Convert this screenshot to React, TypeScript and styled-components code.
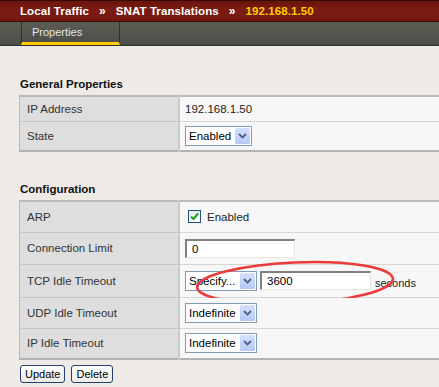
import styled, { createGlobalStyle } from "styled-components";

const GlobalStyle = createGlobalStyle`
  body {
    margin: 0;
    background: #eeebe6;
    font-family: "Liberation Sans", Arial, sans-serif;
    font-size: 11px;
    color: #222;
  }
`;

const generalRows = [{ label: "IP Address", value: "192.168.1.50" }];

const timeoutRows = ["UDP Idle Timeout", "IP Idle Timeout"];

function Select({ text, width }: { text: string; width: number }) {
  return (
    <StSelect style={{ width }}>
      <StSelectText>{text}</StSelectText>
      <StSelectArrow>
        <svg width="9" height="6" viewBox="0 0 9 6">
          <path d="M1 1 L4.5 4.5 L8 1" fill="none" stroke="#4d6185" strokeWidth="1.8" />
        </svg>
      </StSelectArrow>
    </StSelect>
  );
}

function App() {
  return (
    <>
      <GlobalStyle />
      <StTopBar>
        <StCrumb>Local Traffic</StCrumb>
        <StCrumbSep>»</StCrumbSep>
        <StCrumb>SNAT Translations</StCrumb>
        <StCrumbSep>»</StCrumbSep>
        <StCrumb $current>192.168.1.50</StCrumb>
      </StTopBar>
      <StTabBar>
        <StTab>Properties</StTab>
      </StTabBar>

      <StContent>
        <StSectionTitle>General Properties</StSectionTitle>
        <StTable>
          <tbody>
            {generalRows.map((row) => (
              <StRow key={row.label} $height={25}>
                <StLabel>{row.label}</StLabel>
                <StValue>{row.value}</StValue>
              </StRow>
            ))}
            <StRow $height={30}>
              <StLabel>State</StLabel>
              <StValue>
                <Select text="Enabled" width={67} />
              </StValue>
            </StRow>
          </tbody>
        </StTable>

        <StSectionTitle $top={31}>Configuration</StSectionTitle>
        <StTable>
          <tbody>
            <StRow $height={31}>
              <StLabel>ARP</StLabel>
              <StValue>
                <StCheckRow>
                  <StCheckbox>
                    <svg width="11" height="11" viewBox="0 0 11 11">
                      <path d="M2 5.5 L4.5 8 L9 2.5" fill="none" stroke="#21a121" strokeWidth="2" />
                    </svg>
                  </StCheckbox>
                  Enabled
                </StCheckRow>
              </StValue>
            </StRow>
            <StRow $height={32}>
              <StLabel>Connection Limit</StLabel>
              <StValue>
                <StInput style={{ width: 110 }}>0</StInput>
              </StValue>
            </StRow>
            <StRow $height={33}>
              <StLabel>TCP Idle Timeout</StLabel>
              <StValue>
                <StInline>
                  <Select text="Specify..." width={72} />
                  <StInput style={{ width: 111 }}>3600</StInput>
                  <StUnit>seconds</StUnit>
                </StInline>
                <StCircle width="204" height="48" viewBox="0 0 204 48">
                  <ellipse
                    cx="101"
                    cy="23"
                    rx="98"
                    ry="20.5"
                    transform="rotate(-2.5 101 23)"
                    fill="none"
                    stroke="#ec3b3b"
                    strokeWidth="2.6"
                  />
                </StCircle>
              </StValue>
            </StRow>
            {timeoutRows.map((label) => (
              <StRow key={label} $height={31}>
                <StLabel>{label}</StLabel>
                <StValue>
                  <Select text="Indefinite" width={72} />
                </StValue>
              </StRow>
            ))}
          </tbody>
        </StTable>

        <StButtons>
          <StButton>Update</StButton>
          <StButton>Delete</StButton>
        </StButtons>
      </StContent>
    </>
  );
}

const StTopBar = styled.div`
  display: flex;
  align-items: center;
  gap: 10px;
  padding-left: 20px;
  background: linear-gradient(#6a140c, #7b1b11 40%, #761810);
  border-top: 1px solid #3a0a05;
  border-bottom: 1px solid #3a0a05;
  box-sizing: border-box;
  height: 22px;
`;

const StCrumb = styled.span<{ $current?: boolean }>`
  font-size: 11.5px;
  font-weight: bold;
  letter-spacing: 0.1px;
  color: ${(props) => (props.$current ? "#ffcc00" : "#ffffff")};
`;

const StCrumbSep = styled.span`
  font-size: 12px;
  font-weight: bold;
  color: #ffffff;
`;

const StTabBar = styled.div`
  display: flex;
  height: 23px;
  padding-left: 21px;
  background: linear-gradient(#5c5c55, #4d4d47);
  border-bottom: 1px solid #2e2e2a;
`;

const StTab = styled.div`
  width: 99px;
  box-sizing: border-box;
  padding: 4px 0 0 10px;
  border-left: 1px solid #2e2e2a;
  border-right: 1px solid #2e2e2a;
  border-bottom: 3px solid #ffcc00;
  color: #e6e6e6;
  font-size: 11px;
`;

const StContent = styled.div`
  padding: 0 0 0 19px;
`;

const StSectionTitle = styled.div<{ $top?: number }>`
  margin-top: ${(props) => props.$top ?? 32}px;
  padding-left: 1px;
  height: 17px;
  font-size: 11.5px;
  font-weight: bold;
  color: #111;
`;

const StTable = styled.table`
  width: 100%;
  border-collapse: collapse;
  border-top: 2px solid #b9b9b9;
  border-bottom: 2px solid #b3b3b3;
  border-left: 1px solid #b9b9b9;
`;

const StRow = styled.tr<{ $height: number }>`
  height: ${(props) => props.$height}px;
  border-bottom: 1px solid #d6d6d6;
`;

const StLabel = styled.td`
  width: 151px;
  padding: 0 0 0 7px;
  background: #dedede;
  border-right: 2px solid #cacaca;
  border-bottom: 1px solid #c6c6c6;
  font-size: 11.5px;
  color: #333;
`;

const StValue = styled.td`
  position: relative;
  padding: 0 0 0 5px;
  background: #f7f7f7;
  font-size: 11.5px;
  color: #222;
`;

const StSelect = styled.div`
  display: flex;
  align-items: center;
  justify-content: space-between;
  box-sizing: border-box;
  height: 20px;
  background: #ffffff;
  border: 1px solid #7f9db9;
`;

const StSelectText = styled.span`
  padding-left: 3px;
  font-size: 11.5px;
  color: #000;
`;

const StSelectArrow = styled.span`
  display: flex;
  align-items: center;
  justify-content: center;
  width: 15px;
  height: 16px;
  margin-right: 1px;
  background: linear-gradient(#d4e0fb, #b6c9f7);
  border-radius: 1px;
`;

const StCheckRow = styled.div`
  display: flex;
  align-items: center;
  gap: 6px;
  padding-left: 3px;
  font-size: 11.5px;
`;

const StCheckbox = styled.span`
  display: flex;
  align-items: center;
  justify-content: center;
  width: 13px;
  height: 13px;
  box-sizing: border-box;
  background: linear-gradient(#e8e8e2, #ffffff);
  border: 1px solid #1c5180;
`;

const StInput = styled.div`
  box-sizing: border-box;
  height: 19px;
  padding: 2px 0 0 5px;
  background: #ffffff;
  border-top: 2px solid #808080;
  border-left: 2px solid #808080;
  border-right: 1px solid #ece6d8;
  border-bottom: 1px solid #ece6d8;
  font-size: 11.5px;
  color: #000;
`;

const StInline = styled.div`
  display: flex;
  align-items: center;
  gap: 3px;
`;

const StUnit = styled.span`
  margin-left: 1px;
  padding-top: 4px;
  font-size: 11px;
  color: #222;
`;

const StCircle = styled.svg`
  position: absolute;
  left: 14px;
  top: -5px;
  pointer-events: none;
`;

const StButtons = styled.div`
  display: flex;
  gap: 6px;
  padding: 5px 0 0 1px;
`;

const StButton = styled.button`
  height: 18px;
  padding: 0 4px;
  background: linear-gradient(#ffffff, #ecebe6);
  border: 1px solid #23406e;
  border-radius: 3px;
  font-family: "Liberation Sans", Arial, sans-serif;
  font-size: 11px;
  color: #000;
`;

export default App;
